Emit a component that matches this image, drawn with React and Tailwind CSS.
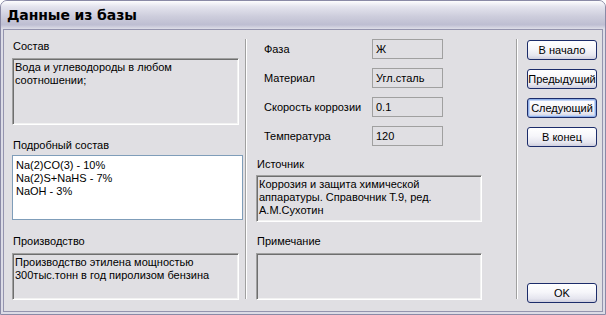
import React from "react";

const font = { fontFamily: '"Liberation Sans", Arial, sans-serif' };

// Sunken read-only edit (XP silver)
const Sunken = ({ className = "", children }) => (
  <div
    className={`border border-t-[#a0a0a0] border-l-[#a0a0a0] border-b-white border-r-white shadow-[inset_1px_1px_0_#6e6e6e,inset_-1px_-1px_0_#f2f2f2] pl-[2px] pt-[2px] leading-[13px] ${className}`}
  >
    {children}
  </div>
);

const Field = ({ label, value }) => (
  <div className="flex items-center h-[20px]">
    <div className="w-[116px] pl-[8px]">{label}</div>
    <div className="w-[71px] h-[20px] border border-[#a0a0a0] flex items-center pl-[3px]">
      {value}
    </div>
  </div>
);

const XpButton = ({ children, focused = false, className = "" }) => (
  <div
    className={`w-[70px] h-[20px] rounded-[3px] border border-[#1c2c6a] bg-[linear-gradient(to_bottom,#ffffff_0%,#f6f6fa_45%,#e6e6ef_80%,#cfcfde_100%)] flex items-center justify-center ${
      focused ? "shadow-[inset_0_0_0_1px_#8fb0e8,inset_0_0_0_2px_#c4d4f4]" : ""
    } ${className}`}
  >
    {children}
  </div>
);

const Separator = () => (
  <div className="mt-[9px] h-[260px] w-[2px] border-l border-[#a0a0a0] bg-white" />
);

export default function App() {
  return (
    <div
      className="w-[606px] h-[315px] flex flex-col bg-[#dcdce6] border border-[#8a8aa6] rounded-t-[7px] overflow-hidden text-[11px] text-black"
      style={font}
    >
      {/* Title bar */}
      <div className="h-[28px] shrink-0 flex items-center pl-[6px] bg-[linear-gradient(to_bottom,#fdfdfe_0%,#e4e4ee_20%,#cdcddc_55%,#bebed2_85%,#dedee8_100%)]">
        <span className="text-[14px] font-bold tracking-[-0.1px] pt-[1px]" style={{ fontFamily: '"DejaVu Sans", Verdana, sans-serif' }}>
          Данные из базы
        </span>
      </div>

      {/* Client */}
      <div className="flex-1 px-[2px] pb-[2px] flex">
        <div className="flex-1 border border-[#9494ae] bg-[#e0dfe3] flex">
          {/* Left column */}
          <div className="ml-[8px] w-[231px] flex flex-col pt-[10px]">
            <div className="h-[13px] leading-[13px] pl-[1px]">Состав</div>
            <Sunken className="mt-[5px] w-[227px] h-[67px]">
              Вода и углеводороды в любом
              <br />
              соотношении;
            </Sunken>
            <div className="mt-[14px] h-[13px] leading-[13px] pl-[1px]">Подробный состав</div>
            <div className="mt-[3px] w-[231px] h-[65px] bg-white border border-[#7f9db9] pl-[3px] pt-[3px] leading-[13px]">
              <div>Na(2)CO(3) - 10%</div>
              <div>Na(2)S+NaHS - 7%</div>
              <div>NaOH - 3%</div>
            </div>
            <div className="mt-[15px] h-[13px] leading-[13px] pl-[1px]">Производство</div>
            <Sunken className="mt-[5px] w-[227px] h-[47px]">
              Производство этилена мощностью
              <br />
              300тыс.тонн в год пиролизом бензина
            </Sunken>
          </div>

          <div className="ml-[2px]">
            <Separator />
          </div>

          {/* Middle column */}
          <div className="ml-[9px] w-[226px] flex flex-col pt-[9px]">
            <div className="flex flex-col gap-[9px]">
              <Field label="Фаза" value="Ж" />
              <Field label="Материал" value="Угл.сталь" />
              <Field label="Скорость коррозии" value="0.1" />
              <Field label="Температура" value="120" />
            </div>
            <div className="mt-[12px] h-[13px] leading-[13px] pl-[1px]">Источник</div>
            <Sunken className="mt-[4px] w-[226px] h-[47px]">
              Коррозия и защита химической
              <br />
              аппаратуры. Справочник Т.9, ред.
              <br />
              А.М.Сухотин
            </Sunken>
            <div className="mt-[13px] h-[13px] leading-[13px] pl-[1px]">Примечание</div>
            <Sunken className="mt-[5px] w-[226px] h-[47px]" />
          </div>

          <div className="ml-[34px]">
            <Separator />
          </div>

          {/* Buttons */}
          <div className="ml-[9px] flex flex-col pt-[10px] pb-[8px]">
            <div className="flex flex-col gap-[9px]">
              <XpButton>В начало</XpButton>
              <XpButton>Предыдущий</XpButton>
              <XpButton focused>Следующий</XpButton>
              <XpButton>В конец</XpButton>
            </div>
            <XpButton className="mt-auto">OK</XpButton>
          </div>
        </div>
      </div>
    </div>
  );
}
